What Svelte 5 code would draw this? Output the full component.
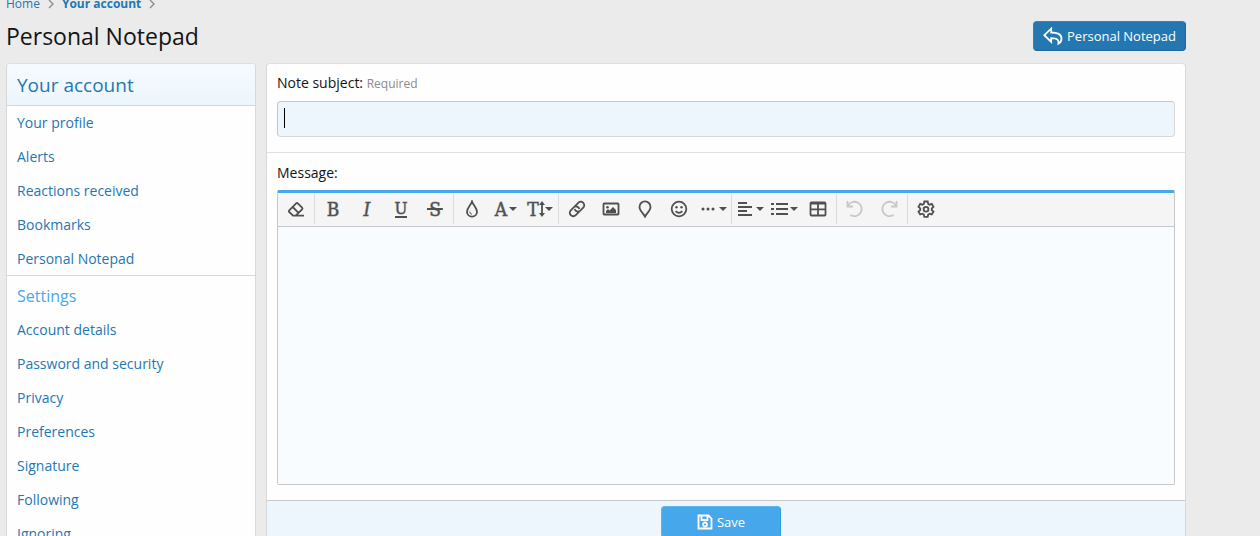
<script>
  const accountLinks = ['Your profile', 'Alerts', 'Reactions received', 'Bookmarks', 'Personal Notepad'];
  const settingsLinks = ['Account details', 'Password and security', 'Privacy', 'Preferences', 'Signature', 'Following', 'Ignoring'];

  const groups = [
    [{ id: 'eraser', label: 'Remove formatting' }],
    [
      { id: 'bold', label: 'Bold' },
      { id: 'italic', label: 'Italic' },
      { id: 'underline', label: 'Underline' },
      { id: 'strike', label: 'Strike-through' }
    ],
    [
      { id: 'drop', label: 'Text color' },
      { id: 'font', label: 'Font family', menu: true },
      { id: 'size', label: 'Font size', menu: true }
    ],
    [
      { id: 'link', label: 'Insert link' },
      { id: 'image', label: 'Insert image' },
      { id: 'pin', label: 'Insert location' },
      { id: 'smile', label: 'Smilies' },
      { id: 'dots', label: 'Insert', menu: true }
    ],
    [
      { id: 'align', label: 'Alignment', menu: true },
      { id: 'list', label: 'List', menu: true },
      { id: 'table', label: 'Insert table' }
    ],
    [
      { id: 'undo', label: 'Undo', disabled: true },
      { id: 'redo', label: 'Redo', disabled: true }
    ],
    [{ id: 'gear', label: 'Toggle BB code' }]
  ];
  const letters = { bold: 'B', italic: 'I', underline: 'U', strike: 'S', font: 'A' };

  let subject = $state('');
</script>

<div class="page">
  <nav class="crumbs" aria-label="Breadcrumb">
    <a href="#home">Home</a>
    <svg width="6" height="10" viewBox="0 0 6 10"><path d="M1 1l4 4-4 4" /></svg>
    <a class="current" href="#account">Your account</a>
    <svg width="6" height="10" viewBox="0 0 6 10"><path d="M1 1l4 4-4 4" /></svg>
  </nav>

  <header class="title">
    <h1>Personal Notepad</h1>
    <a class="button back" href="#notepad">
      <svg width="20" height="18" viewBox="0 0 20 18"><path d="M8.200 1.700v3.800c6 0 10.300 1.700 10.300 6.200 0 2.700-1.400 4.200-3.100 4.900.7-3.400-.8-5.400-7.200-5.400v3.600L1.300 8.200z" /></svg>
      Personal Notepad
    </a>
  </header>

  <div class="columns">
    <aside class="block side">
      <h2>Your account</h2>
      <ul>
        {#each accountLinks as item}<li><a href="#item">{item}</a></li>{/each}
      </ul>
      <h3>Settings</h3>
      <ul>
        {#each settingsLinks as item}<li><a href="#item">{item}</a></li>{/each}
      </ul>
    </aside>

    <form class="block main">
      <div class="field subject">
        <div class="label"><label for="subject">Note subject:</label> <small>Required</small></div>
        <div class="inputwrap">
          <input id="subject" type="text" bind:value={subject} />
          <span class="caret"></span>
        </div>
      </div>
      <div class="field message">
        <div class="label"><label for="message">Message:</label></div>
        <div class="editor">
          <div class="toolbar">
            {#each groups as group}
              <div class="group">
                {#each group as tool}
                  <button type="button" class="tool {tool.id}" class:menu={tool.menu} aria-label={tool.label} disabled={tool.disabled}>
                    {#if letters[tool.id]}
                      <span class="letter">{letters[tool.id]}</span>
                    {:else if tool.id === 'size'}
                      <span class="letter">T</span>
                      <svg width="6" height="16" viewBox="0 0 6 16"><path d="M3 2v12" /><path class="solid" d="M3 0l3 4H0zM3 16l3-4H0z" /></svg>
                    {:else}
                      <svg width="18" height="18" viewBox="0 0 18 18">
                        {#if tool.id === 'eraser'}
                          <path d="M6 15.700L2.200 12q-.8-.8 0-1.600l7-7q.8-.8 1.600 0l4.300 4.300q.8.8 0 1.600L8.700 15.700M5.700 7l5.800 5.800M5.500 15.700H17" />
                        {:else if tool.id === 'drop'}
                          <path d="M9 1.500C8 5 4 8 4 11.700a5 5 0 0 0 10 0C14 8 10 5 9 1.500z" /><path class="fine" d="M6.700 11.500q0 2.500 2.300 2.800" />
                        {:else if tool.id === 'link'}
                          <g transform="rotate(-45 9 9)"><path d="M9 12.500H3.700a3.500 3.500 0 0 1 0-7h4.100a3.500 3.500 0 0 1 2.900 5.200M9 5.500h5.300a3.500 3.500 0 0 1 0 7h-4.100a3.500 3.500 0 0 1-2.900-5.200" /></g>
                        {:else if tool.id === 'image'}
                          <rect x="1.500" y="3.500" width="15" height="11" rx=".7" /><circle class="solid" cx="5.500" cy="7.200" r="1.300" /><path class="solid" d="M4 13v-2l2-2 1.500 1.500L11 7l3 3v3z" />
                        {:else if tool.id === 'pin'}
                          <path d="M9 16.700C7.500 13.500 3.500 10.500 3.500 6.900a5.500 5.500 0 0 1 11 0c0 3.600-4 6.600-5.500 9.800z" />
                        {:else if tool.id === 'smile'}
                          <circle cx="9" cy="9" r="7.300" /><circle class="solid" cx="6.500" cy="7.200" r="1.200" /><circle class="solid" cx="11.500" cy="7.200" r="1.200" /><path d="M5.600 11.200q3.400 3.500 6.800 0" />
                        {:else if tool.id === 'dots'}
                          <circle class="solid" cx="4" cy="9" r="1.500" /><circle class="solid" cx="9" cy="9" r="1.500" /><circle class="solid" cx="14" cy="9" r="1.500" />
                        {:else if tool.id === 'align'}
                          <path class="thick" d="M2 3h9M2 7h14M2 11h9M2 15h14" />
                        {:else if tool.id === 'list'}
                          <path class="thick" d="M6 4h12M6 9h12M6 14h12M1 4h3M1 9h3M1 14h3" />
                        {:else if tool.id === 'table'}
                          <rect x="1.500" y="2.500" width="15" height="13" rx="1" /><path d="M1.500 3.500h15M9 3v12.500M1.500 9.300h15" />
                        {:else if tool.id === 'undo'}
                          <path d="M1.500 1v5.500H7M1.800 6.300A7.200 7.200 0 1 1 4.500 15" />
                        {:else if tool.id === 'redo'}
                          <path d="M16.500 1v5.500H11M16.200 6.300A7.200 7.200 0 1 0 13.500 15" />
                        {:else if tool.id === 'gear'}
                          <path d="M7.300 1.500h3.400l.5 2.400 1.400.8 2.200-.8 1.700 2.900-1.700 1.600v1.600l1.700 1.600-1.700 2.900-2.200-.8-1.400.8-.5 2.400H7.300l-.5-2.400-1.400-.8-2.200.8-1.700-2.900L3.200 10V8.400L1.500 6.800l1.700-2.900 2.200.8 1.400-.8z" /><circle cx="9" cy="9.200" r="2.400" />
                        {/if}
                      </svg>
                    {/if}
                    {#if tool.menu}<i class="arrow"></i>{/if}
                  </button>
                {/each}
              </div>
            {/each}
          </div>
          <textarea id="message"></textarea>
        </div>
      </div>
      <footer>
        <button class="button save" type="button">
          <svg width="16" height="16" viewBox="0 0 16 16"><path d="M1.500 1.500h10l3 3v10h-13zM4.500 2v4h6V2" /><circle cx="8" cy="10.500" r="2" /></svg>
          Save
        </button>
      </footer>
    </form>
  </div>
</div>

<style>
  :global(body) {
    background: #ebebeb;
    overflow: hidden;
  }
  .page {
    font-family: 'Segoe UI', 'Open Sans', 'Noto Sans', sans-serif;
    font-size: 14px;
    line-height: 20px;
    color: #141414;
    padding: 0 74px 0 6px;
    display: flow-root;
  }
  a {
    color: #2577b1;
    text-decoration: none;
  }
  svg {
    fill: none;
    stroke: currentColor;
    stroke-width: 1.8;
    flex: none;
  }
  .crumbs {
    display: flex;
    align-items: center;
    gap: 8px;
    margin-top: -6px;
    font-size: 12px;
    color: #8c8c8c;
  }
  .crumbs svg {
    stroke-width: 1.4;
  }
  .current {
    font-weight: 700;
  }
  .title {
    display: flex;
    align-items: center;
    justify-content: space-between;
    height: 30px;
    margin: 6px 0 13px;
    margin: 7px 0 12px;
  }
  h1 {
    margin: 0;
    font-size: 23px;
    line-height: 32px;
    font-weight: 400;
  }
  .button {
    box-sizing: border-box;
    display: flex;
    align-items: center;
    justify-content: center;
    gap: 4px;
    height: 30px;
    border: 1px solid;
    border-radius: 4px;
    font-family: inherit;
    font-size: 13px;
    color: #fff;
  }
  .back {
    padding: 0 9px;
    background: #2577b1;
    border-color: #2a86c8 #20689a #20689a #2a86c8;
  }
  .columns {
    display: flex;
    align-items: flex-start;
    gap: 10px;
  }
  .block {
    box-sizing: border-box;
    background: #fefefe;
    border: 1px solid #d8d8d8;
    border-top-color: #dfdfdf;
    border-radius: 4px;
    overflow: hidden;
  }
  .side {
    width: 250px;
    flex: none;
  }
  h2 {
    margin: 0;
    padding: 7px 10px 5px;
    font-size: 19px;
    line-height: 29px;
    font-weight: 400;
    color: #2577b1;
    background: linear-gradient(#f5faff, #edf6fd);
    border-bottom: 1px solid #d8d8d8;
  }
  h3 {
    margin: 0;
    padding: 8px 10px 5px;
    font-size: 16px;
    line-height: 24px;
    font-weight: 400;
    color: #47a7eb;
    border-top: 1px solid #d8d8d8;
  }
  ul {
    margin: 0;
    padding: 0;
    list-style: none;
  }
  li a {
    display: block;
    padding: 7px 10px;
  }
  ul:first-of-type li:last-child a {
    padding-bottom: 6px;
  }
  .main {
    flex: 1;
    min-width: 0;
  }
  .label {
    line-height: 20px;
    margin-bottom: 7px;
  }
  small {
    font-size: 12px;
    color: #8c8c8c;
  }
  .field {
    padding: 9px 10px 15px;
  }
  .message {
    padding-top: 10px;
    border-top: 1px solid #dfdfdf;
  }
  .inputwrap {
    position: relative;
  }
  input {
    display: block;
    box-sizing: border-box;
    width: 100%;
    height: 36px;
    padding: 6px;
    font: inherit;
    background: #edf6fd;
    border: 1px solid #d8d8d8;
    border-color: #c5c8cb #d8d8d8 #d8d8d8 #c5c8cb;
    border-radius: 4px;
    outline: none;
  }
  .caret {
    position: absolute;
    left: 7px;
    top: 7px;
    width: 1px;
    height: 20px;
    background: #000;
  }
  .editor {
    border: 1px solid #c8c8c8;
    border-top: 3px solid #47a7eb;
    border-radius: 2px;
  }
  .toolbar {
    display: flex;
    flex-wrap: wrap;
    padding: 1px 0 2px;
    background: #f5f5f5;
    border-bottom: 1px solid #c8c8c8;
  }
  .group {
    display: flex;
    padding: 0 1px;
    border-right: 1px solid #dcdcdc;
  }
  .group:last-child {
    border-right: 0;
  }
  .tool {
    display: flex;
    align-items: center;
    justify-content: center;
    width: 34px;
    height: 30px;
    padding: 0;
    border: 0;
    background: none;
    color: #505050;
  }
  .tool:disabled {
    color: #c8c8c8;
  }
  .menu {
    gap: 2px;
  }
  .letter {
    font-family: 'DejaVu Serif Condensed', 'DejaVu Serif', serif;
    font-size: 19px;
    line-height: 20px;
    -webkit-text-stroke: 1px rgba(80, 80, 80, 0.5);
  }
  .italic .letter {
    font-style: italic;
  }
  .underline .letter {
    font-size: 17px;
    line-height: 15px;
    border-bottom: 2px solid;
  }
  .strike .letter {
    padding: 0 2px;
    background: linear-gradient(currentColor, currentColor) center / 100% 2px no-repeat;
  }
  .size {
    gap: 0;
  }
  .arrow {
    border: 4px solid transparent;
    border-top-color: currentColor;
    border-bottom: 0;
  }
  .solid {
    fill: currentColor;
    stroke: none;
  }
  .thick {
    stroke-width: 2;
  }
  .fine {
    stroke-width: 1;
  }
  textarea {
    display: block;
    box-sizing: border-box;
    width: 100%;
    height: 257px;
    padding: 10px;
    border: 0;
    outline: none;
    resize: none;
    font: inherit;
    background: #f8fcff;
  }
  footer {
    display: flex;
    justify-content: center;
    padding: 5px 20px 5px 10px;
    background: #edf5fd;
    border-top: 1px solid #c8c8c8;
  }
  .save {
    width: 120px;
    height: 32px;
    background: #47a7eb;
    border-color: #5eb2ed #309ce8 #309ce8 #5eb2ed;
  }
</style>
